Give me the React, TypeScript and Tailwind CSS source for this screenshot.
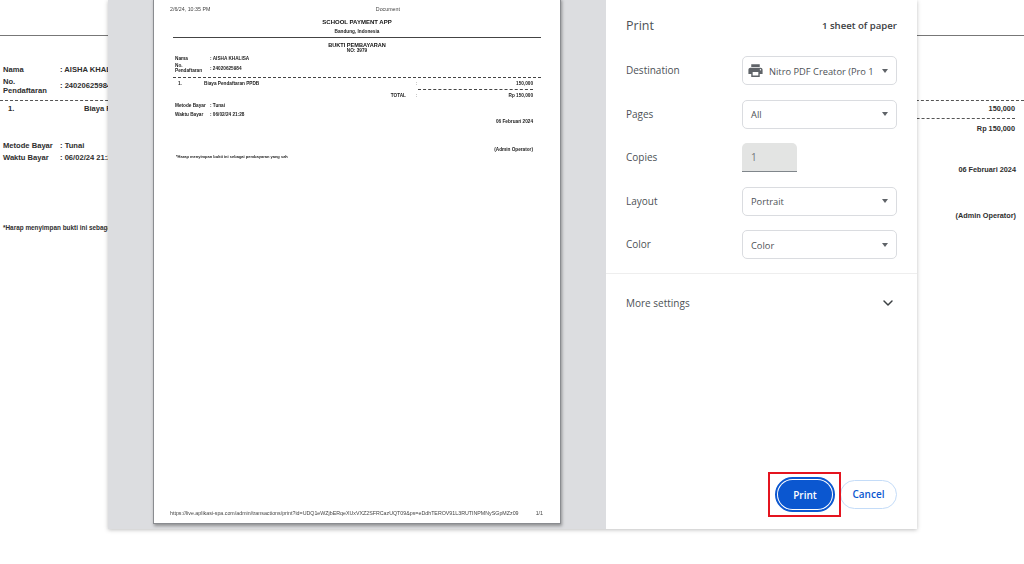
import { ChevronDown } from "lucide-react";

const sans = "font-['Liberation_Sans',Arial,sans-serif]";
const ui = "font-['Open_Sans','Noto_Sans',sans-serif]";

function Caret() {
  return (
    <svg width="6" height="4" viewBox="0 0 6 4" className="shrink-0">
      <path d="M0 0h6L3 4z" fill="#5f6368" />
    </svg>
  );
}

function PrinterIcon() {
  return (
    <svg width="17" height="17" viewBox="0 0 24 24" className="shrink-0">
      <path
        fill="#5f6368"
        d="M19 8H5c-1.66 0-3 1.34-3 3v6h4v4h12v-4h4v-6c0-1.66-1.34-3-3-3zm-3 11H8v-5h8v5zm3-7c-.55 0-1-.45-1-1s.45-1 1-1 1 .45 1 1-.45 1-1 1zm-1-9H6v4h12V3z"
      />
    </svg>
  );
}

function SettingRow({ label, children }: { label: string; children: React.ReactNode }) {
  return (
    <div className="flex items-center h-[29px] px-5">
      <span className="w-[116px] text-[10px] text-[#4d5156]">{label}</span>
      {children}
    </div>
  );
}

function Select({ value, icon }: { value: string; icon?: boolean }) {
  return (
    <div className={`w-[155px] h-[29px] flex items-center rounded-[5px] border border-[#dadce0] pr-[8px] bg-white ${icon ? "pl-[4px] gap-[5px]" : "pl-[8px]"}`}>
      {icon ? <PrinterIcon /> : null}
      <span className="flex-1 min-w-0 whitespace-nowrap text-[9.3px] text-[#4d5156] pt-[2px]">{value}</span>
      <Caret />
    </div>
  );
}

// the receipt that sits behind the dialog
function BackgroundDoc() {
  return (
    <div className={`${sans} font-bold text-[7.6px] leading-[12px] text-[#2e2e2e] pt-[35px]`}>
      <div className="border-t border-[#777]" />
      <div className="pl-[3px] pt-[28px]">
        <div className="flex items-center h-[12px]">
          <span className="w-[57px]">Nama</span>
          <span>: AISHA KHALISA</span>
        </div>
        <div className="flex items-center h-[20px]">
          <span className="w-[57px] leading-[9px]">
            No.
            <br />
            Pendaftaran
          </span>
          <span>: 24020625984</span>
        </div>
      </div>
      <div className="border-t border-dashed border-[#555] mt-[4px]" />
      <div className="flex h-[14px] items-center pt-[1px] pl-[8px] pr-[9px]">
        <span className="w-[76px]">1.</span>
        <span className="flex-1">Biaya Pendaftaran PPDB</span>
        <span className="text-[7.3px]">150,000</span>
      </div>
      <div className="ml-[600px] mr-[9px] mt-[3px] border-t border-dashed border-[#555]" />
      <div className="h-[19px] flex items-center justify-end pr-[9px] text-[7.3px]">Rp 150,000</div>
      <div className="flex pl-[3px] mt-[2px]">
        <span className="w-[57px]">Metode Bayar</span>
        <span>: Tunai</span>
      </div>
      <div className="flex pl-[3px]">
        <span className="w-[57px]">Waktu Bayar</span>
        <span>: 06/02/24 21:28</span>
      </div>
      <div className="text-right pr-[8px] text-[7.3px]">06 Februari 2024</div>
      <div className="text-right pr-[8px] text-[7.3px] mt-[34px]">(Admin Operator)</div>
      <div className="pl-[3px] text-[6.4px]">*Harap menyimpan bukti ini sebagai pembayaran yang sah</div>
    </div>
  );
}

function PaperRow({ a, b }: { a: React.ReactNode; b: string }) {
  return (
    <div className="flex items-center pl-[21px]">
      <span className="w-[35px]">{a}</span>
      <span>{b}</span>
    </div>
  );
}

function Paper() {
  return (
    <div className={`${sans} w-[408px] h-[526px] -mt-[2px] bg-white border border-[#8a8c90] shadow-[1px_2px_3px_rgba(0,0,0,0.35)] flex flex-col font-bold text-[#222] text-[4.7px] leading-[5px] blur-[0.3px]`}>
      <div className="flex justify-between font-normal text-[5.3px] leading-[6px] pl-[16px] pr-[160px] pt-[7px] text-[#444]">
        <span>2/6/24, 10:35 PM</span>
        <span>Document</span>
      </div>
      <div className="text-center text-[6px] leading-[6px] mt-[7px] text-[#111]">SCHOOL PAYMENT APP</div>
      <div className="text-center mt-[4px]">Bandung, Indonesia</div>
      <div className="border-t border-[#444] mx-[19px] mt-[3px]" />
      <div className="text-center text-[5.6px] leading-[6px] mt-[4px] text-[#111]">BUKTI PEMBAYARAN</div>
      <div className="text-center">NO: 3979</div>
      <div className="mt-[3px]">
        <PaperRow a="Nama" b=": AISHA KHALISA" />
      </div>
      <div className="mt-[2px]">
        <PaperRow
          a={
            <>
              No.
              <br />
              Pendaftaran
            </>
          }
          b=": 24020625984"
        />
      </div>
      <div className="border-t border-dashed border-[#444] mx-[19px] mt-[4px]" />
      <div className="flex pl-[24px] pr-[27px] mt-[3px]">
        <span className="w-[26px]">1.</span>
        <span className="w-[212px]">Biaya Pendaftaran PPDB</span>
        <span className="flex-1 font-normal">:</span>
        <span>150,000</span>
      </div>
      <div className="border-t border-dashed border-[#444] ml-[264px] mr-[27px] mt-[3px]" />
      <div className="flex pr-[27px] mt-[3px]">
        <span className="w-[252px] text-right">TOTAL</span>
        <span className="flex-1 font-normal pl-[10px]">:</span>
        <span>Rp 150,000</span>
      </div>
      <div className="mt-[5px]">
        <PaperRow a="Metode Bayar" b=": Tunai" />
      </div>
      <div className="mt-[4px]">
        <PaperRow a="Waktu Bayar" b=": 06/02/24 21:28" />
      </div>
      <div className="text-right pr-[27px] mt-[2px]">06 Februari 2024</div>
      <div className="text-right pr-[27px] mt-[23px]">(Admin Operator)</div>
      <div className="pl-[22px] mt-[2px] text-[4px]">*Harap menyimpan bukti ini sebagai pembayaran yang sah</div>
      <div className="mt-auto mb-[7px] flex justify-between pl-[16px] pr-[17px] font-normal text-[5.3px] leading-[6px] text-[#444]">
        <span>https://live.aplikasi-spa.com/admin/transactions/print?id=UDQ1eWZjbERqeXUxVXZ2SFRCazUQT09&amp;ps=eDdhTEROV91L3RUTINPMNySGpMZz09</span>
        <span>1/1</span>
      </div>
    </div>
  );
}

export default function App() {
  return (
    <div className="relative w-[1024px] h-[564px] overflow-hidden bg-white">
      <BackgroundDoc />

      {/* print dialog */}
      <div className="absolute left-[108px] top-0 w-[809px] h-[529px] flex shadow-[0_1px_4px_rgba(0,0,0,0.25)]">
        <div className="w-[498px] bg-[#dcdde0] pl-[45px] overflow-hidden pb-[5px]">
          <Paper />
        </div>

        <div className={`${ui} w-[311px] bg-white flex flex-col`}>
          <div className="h-[52px] flex items-center justify-between px-5 mb-[4px]">
            <span className="text-[12.5px] text-[#4d5156]">Print</span>
            <span className="text-[9.6px] font-semibold text-[#3c4043]">1 sheet of paper</span>
          </div>

          <div className="flex flex-col gap-[14.5px] pb-[14px] border-b border-[#eeeeee]">
            <SettingRow label="Destination">
              <Select icon value="Nitro PDF Creator (Pro 1" />
            </SettingRow>
            <SettingRow label="Pages">
              <Select value="All" />
            </SettingRow>
            <SettingRow label="Copies">
              <div className="w-[55px] h-[29px] flex items-center pl-[9px] rounded-t-[5px] bg-[#e3e4e3] border-b border-[#80868b] text-[10px] text-[#70757a]">
                1
              </div>
            </SettingRow>
            <SettingRow label="Layout">
              <Select value="Portrait" />
            </SettingRow>
            <SettingRow label="Color">
              <Select value="Color" />
            </SettingRow>
          </div>

          <div className="flex items-center justify-between h-[58px] pl-5 pr-[21px]">
            <span className="text-[10px] text-[#4d5156]">More settings</span>
            <ChevronDown className="w-4 h-4 text-[#3c4043]" strokeWidth={2.2} />
          </div>

          <div className="mt-auto mb-[20px] flex justify-end items-center pr-5">
            <div className="relative flex items-center">
              <button className="w-[54px] h-[29px] mr-[8px] pt-[1px] rounded-full bg-[#0b57d0] text-white text-[10px] font-semibold outline outline-2 outline-offset-1 outline-[#0b57d0]">
                Print
              </button>
              {/* red annotation box */}
              <div className="absolute left-[-10px] top-[-8px] w-[73px] h-[45px] border-2 border-[#e4141f]" />
            </div>
            <button className="w-[57px] h-[29px] rounded-full bg-white border border-[#c4dcf8] text-[#0b57d0] text-[10px] font-semibold">
              Cancel
            </button>
          </div>
        </div>
      </div>
    </div>
  );
}
